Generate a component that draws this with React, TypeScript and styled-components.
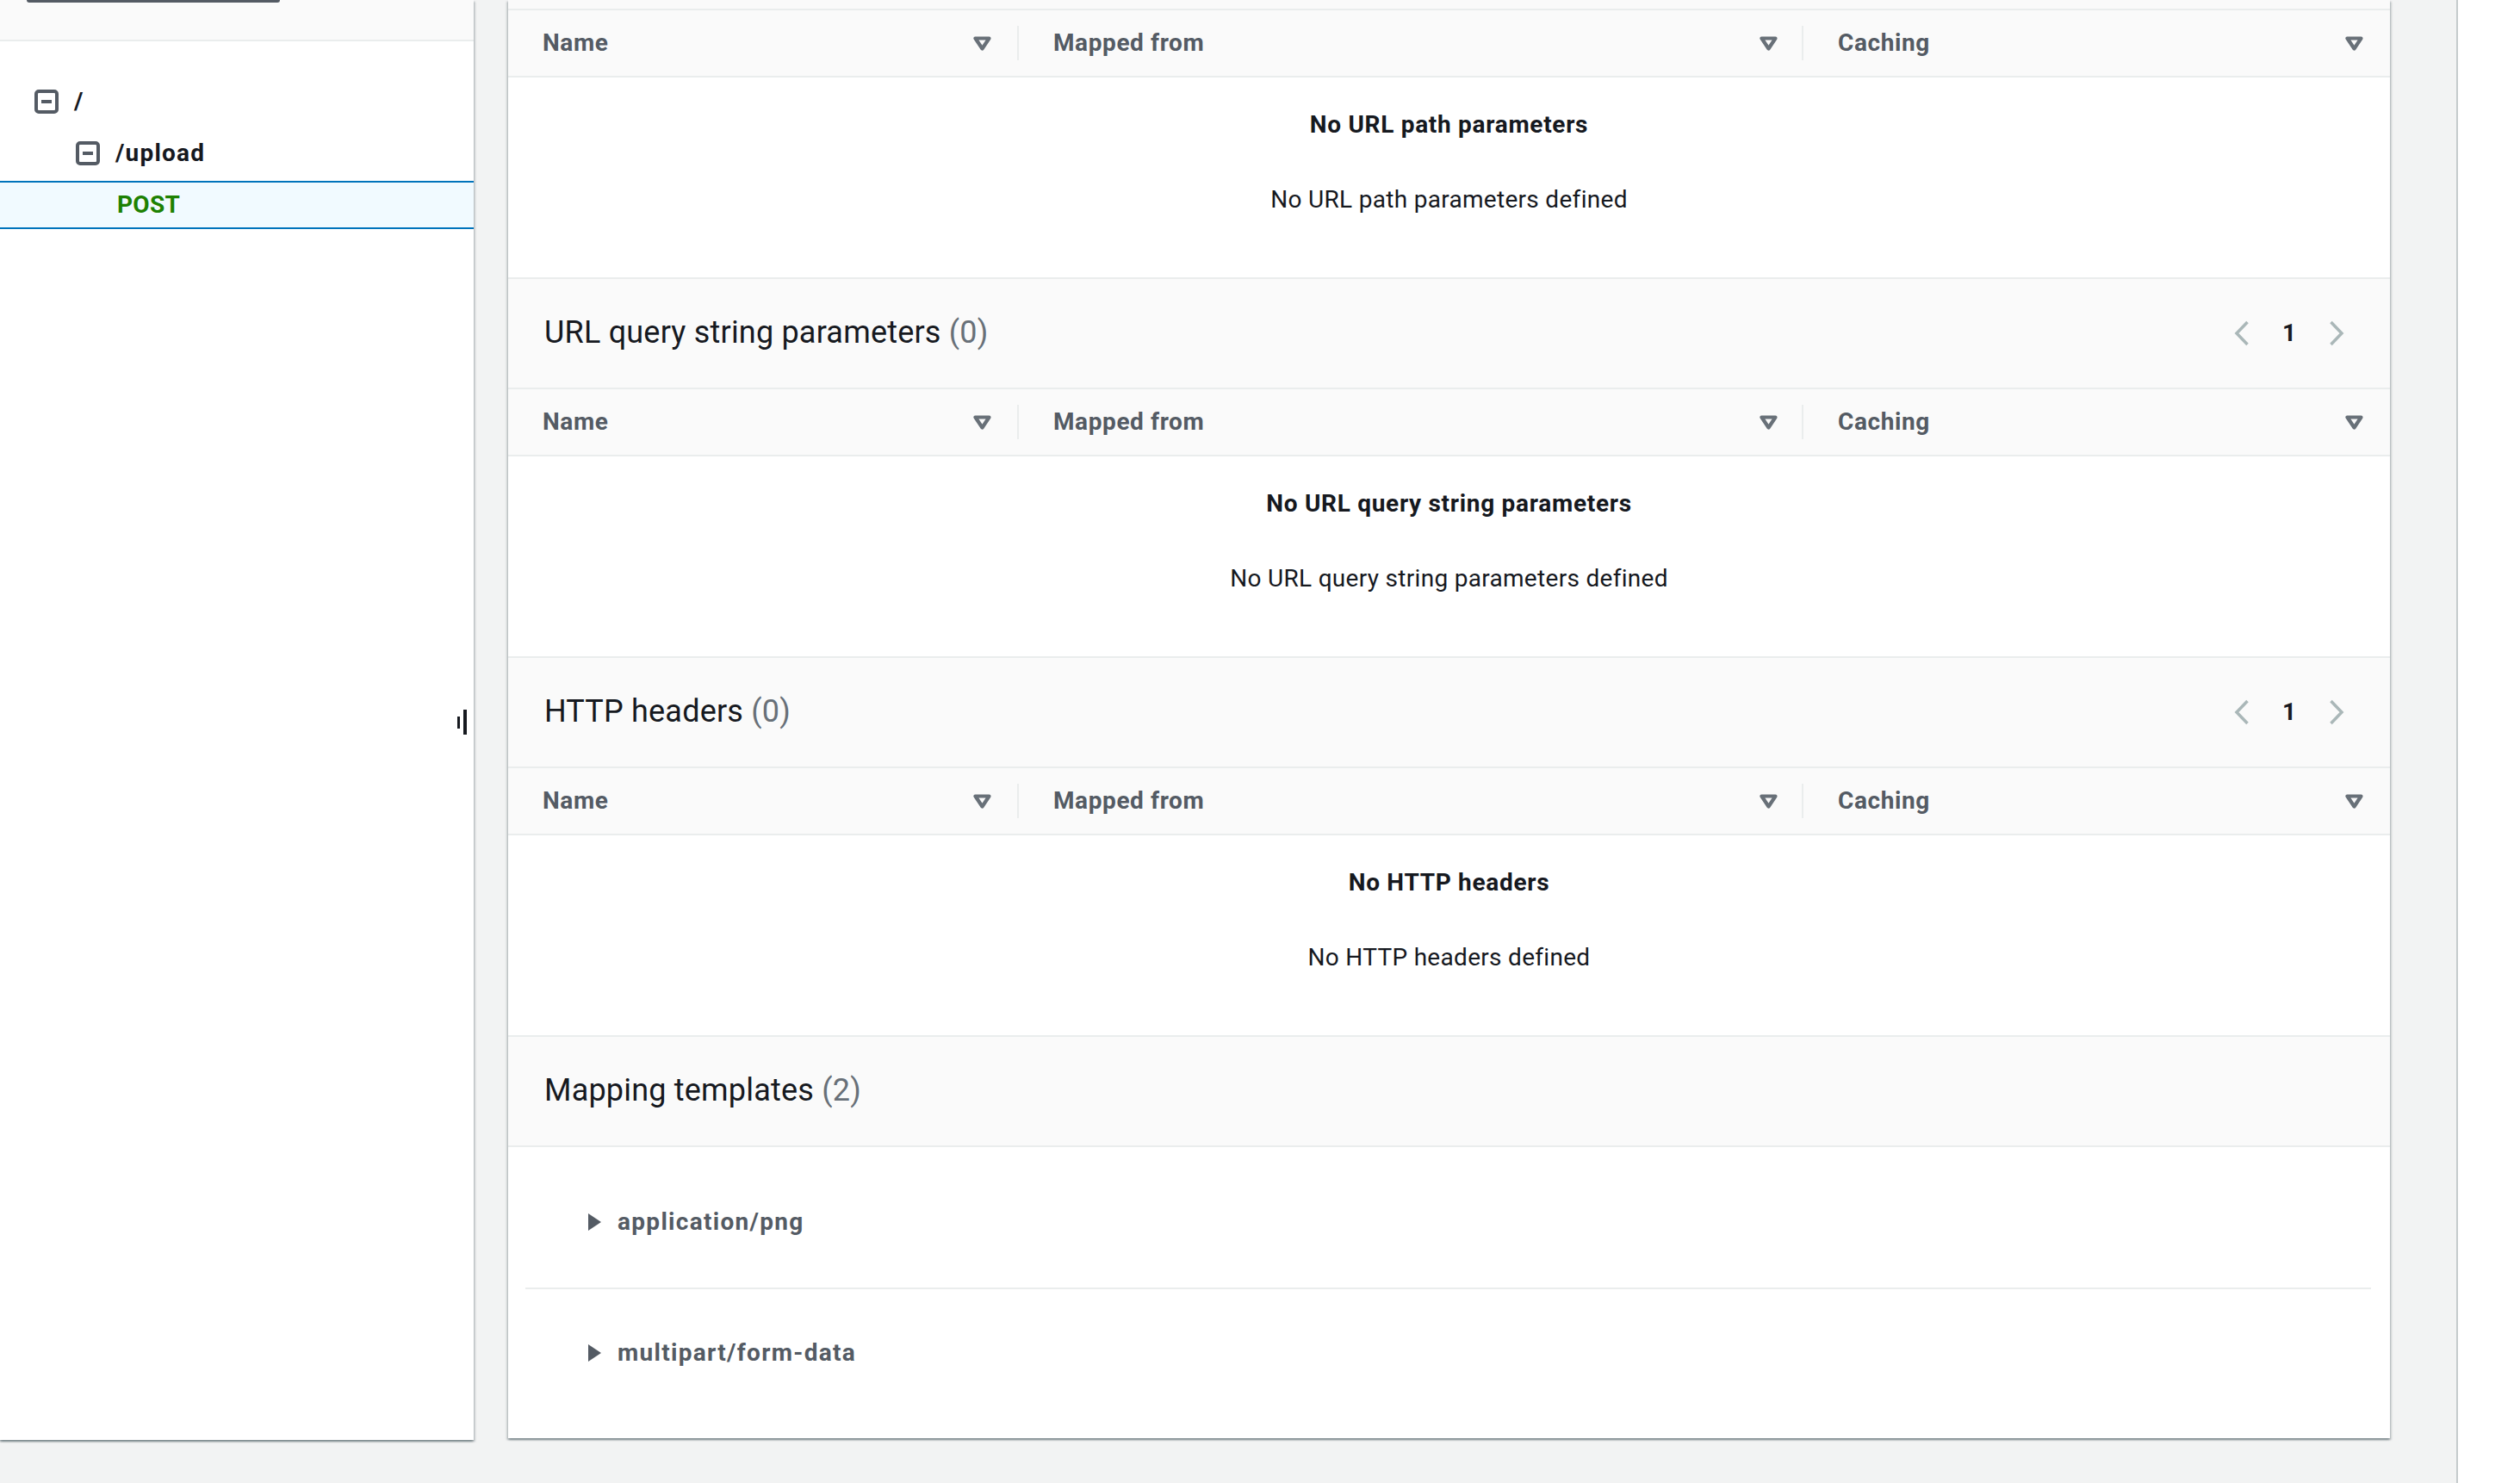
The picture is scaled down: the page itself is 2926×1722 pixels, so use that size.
import React from 'react';
import styled, { createGlobalStyle } from 'styled-components';

const GlobalStyle = createGlobalStyle`
  html, body { margin: 0; padding: 0; background: #f2f3f3; }
  body {
    font-family: Roboto, "Open Sans", "Liberation Sans", Arial, sans-serif;
    color: #16191f;
    overflow: hidden;
  }
  * { box-sizing: border-box; }
`;

const Screen = styled.div`
  width: 2926px;
  height: 1722px;
  overflow: hidden;
  display: flex;
  align-items: flex-start;
  background: #f2f3f3;
`;

const Workspace = styled.div`
  flex: 0 0 2852px;
  display: flex;
  gap: 40px;
  padding-right: 77px;
`;

const cardShadow = `
  box-shadow: 0 2px 2px 0 rgba(0, 28, 36, 0.3), 2px 2px 2px 0 rgba(0, 28, 36, 0.15),
    -2px 2px 2px 0 rgba(0, 28, 36, 0.15);
`;

const LeftPanel = styled.aside`
  position: relative;
  flex: 0 0 550px;
  background: #ffffff;
  ${cardShadow}
  margin-bottom: -2px;
`;

const LeftToolbar = styled.div`
  height: 48px;
  padding-left: 31px;
  background: #fafafa;
  border-bottom: 2px solid #eaeded;
`;

/* the lower edge of the "Actions" button, the rest is scrolled out of view */
const ButtonEdge = styled.div`
  width: 294px;
  height: 3px;
  border: 2px solid #545b64;
  border-top: none;
  border-radius: 0 0 4px 4px;
  background: #545b64;
`;

const Tree = styled.ul`
  list-style: none;
  margin: 0;
  padding: 40px 0 0;
`;

const TreeRow = styled.li<{ $level: number; $selected?: boolean }>`
  display: flex;
  align-items: center;
  gap: 18px;
  height: ${(p) => (p.$selected ? '56px' : '60px')};
  margin-top: ${(p) => (p.$selected ? '2px' : '0')};
  padding-left: ${(p) => 40 + p.$level * 48}px;
  background: ${(p) => (p.$selected ? '#f1faff' : 'transparent')};
  border-top: ${(p) => (p.$selected ? '2px solid #0073bb' : 'none')};
  border-bottom: ${(p) => (p.$selected ? '2px solid #0073bb' : 'none')};
`;

const TreeLabel = styled.span<{ $method?: boolean }>`
  font-size: 28px;
  line-height: 40px;
  font-weight: 700;
  letter-spacing: ${(p) => (p.$method ? '0.3px' : '1.2px')};
  color: ${(p) => (p.$method ? '#1d8102' : '#16191f')};
`;

const Handle = styled.div`
  position: absolute;
  right: 8px;
  top: 824px;
  display: flex;
  align-items: center;
  gap: 4px;
`;

const HandleBar = styled.span<{ $h: number; $w: number }>`
  display: block;
  width: ${(p) => p.$w}px;
  height: ${(p) => p.$h}px;
  background: #16191f;
`;

const MainPanel = styled.main`
  flex: 0 0 2185px;
  background: #ffffff;
  ${cardShadow}
  display: flex;
  flex-direction: column;
`;

const Section = styled.section<{ $first?: boolean }>`
  border-top: ${(p) => (p.$first ? 'none' : '2px solid #eaeded')};
`;

const SectionHeader = styled.header`
  height: 128px;
  padding: 0 53px 0 42px;
  display: flex;
  align-items: center;
  justify-content: space-between;
  background: #fafafa;
  border-bottom: 2px solid #eaeded;
`;

/* lower strip of a section header that is scrolled out of view */
const HeaderStrip = styled.div`
  height: 12px;
  background: #fafafa;
  border-bottom: 2px solid #eaeded;
`;

const Title = styled.h2`
  margin: 0 0 2px;
  font-size: 36px;
  line-height: 48px;
  font-weight: 400;
  color: #16191f;
  letter-spacing: 0.2px;
`;

const Count = styled.span`
  color: #687078;
`;

const Pager = styled.div`
  display: flex;
  align-items: center;
  gap: 38px;
`;

const PageNum = styled.span`
  font-size: 28px;
  line-height: 40px;
  font-weight: 700;
  color: #16191f;
`;

const TableHead = styled.div`
  display: grid;
  grid-template-columns: 591px 911px 1fr;
  height: 78px;
  background: #fafafa;
  border-bottom: 2px solid #eaeded;
`;

const HeadCell = styled.div<{ $divider?: boolean; $right: number }>`
  position: relative;
  display: flex;
  align-items: center;
  justify-content: space-between;
  padding: 0 ${(p) => p.$right}px 0 ${(p) => (p.$divider ? 42 : 40)}px;
  font-size: 28px;
  line-height: 40px;
  font-weight: 700;
  letter-spacing: 0.6px;
  color: #545b64;
  &::before {
    content: '';
    display: ${(p) => (p.$divider ? 'block' : 'none')};
    position: absolute;
    left: 0;
    top: 18px;
    bottom: 18px;
    width: 2px;
    background: #eaeded;
  }
`;

const EmptyBody = styled.div`
  height: 232px;
  padding-top: 35px;
  display: flex;
  flex-direction: column;
  align-items: center;
  text-align: center;
`;

const EmptyTitle = styled.div`
  font-size: 28px;
  line-height: 40px;
  font-weight: 700;
  letter-spacing: 0.7px;
  color: #16191f;
`;

const EmptyText = styled.div`
  margin-top: 47px;
  font-size: 28px;
  line-height: 40px;
  font-weight: 400;
  color: #16191f;
  letter-spacing: 0.3px;
`;

const TemplatesBody = styled.div`
  height: 338px;
  padding: 13px 22px 0 20px;
`;

const TemplateItem = styled.div<{ $divider?: boolean }>`
  display: flex;
  align-items: center;
  gap: 18px;
  padding: 54px 0 56px 72px;
  border-bottom: ${(p) => (p.$divider ? '2px solid #eaeded' : 'none')};
`;

const TemplateLabel = styled.span`
  font-size: 28px;
  line-height: 40px;
  font-weight: 700;
  letter-spacing: 1.3px;
  color: #545b64;
`;

const RightPane = styled.div`
  flex: 1;
  align-self: stretch;
  background: #ffffff;
  border-left: 2px solid #c5cbcc;
`;

const FilterIcon = () => (
  <svg width="21" height="17" viewBox="0 0 21 17" aria-hidden>
    <path d="M2.5 2.5 H18.5 L10.5 14.5 Z" fill="none" stroke="#687078" strokeWidth="4.2" strokeLinejoin="round" />
  </svg>
);

const Chevron = ({ dir }: { dir: 'left' | 'right' }) => (
  <svg width="18" height="30" viewBox="0 0 18 30" aria-hidden>
    <path
      d={dir === 'left' ? 'M15.5 2 L3 15 L15.5 28' : 'M2.5 2 L15 15 L2.5 28'}
      fill="none"
      stroke="#aab7b8"
      strokeWidth="3.5"
    />
  </svg>
);

const CollapseIcon = () => (
  <svg width="28" height="28" viewBox="0 0 28 28" aria-hidden>
    <rect x="2" y="2" width="24" height="24" rx="3" fill="none" stroke="#545b64" strokeWidth="4" />
    <path d="M8 14 H20" stroke="#545b64" strokeWidth="4" />
  </svg>
);

const CaretRight = () => (
  <svg width="17" height="22" viewBox="0 0 17 22" aria-hidden>
    <path d="M1 1 L16 11 L1 21 Z" fill="#545b64" />
  </svg>
);

type ParamSectionProps = {
  title?: string;
  emptyTitle: string;
  emptyText: string;
  first?: boolean;
};

const ParamSection = ({ title, emptyTitle, emptyText, first }: ParamSectionProps) => (
  <Section $first={first}>
    {title ? (
      <SectionHeader>
        <Title>
          {title} <Count>(0)</Count>
        </Title>
        <Pager>
          <Chevron dir="left" />
          <PageNum>1</PageNum>
          <Chevron dir="right" />
        </Pager>
      </SectionHeader>
    ) : (
      <HeaderStrip />
    )}
    <TableHead>
      <HeadCell $right={30}>
        <span>Name</span>
        <FilterIcon />
      </HeadCell>
      <HeadCell $divider $right={28}>
        <span>Mapped from</span>
        <FilterIcon />
      </HeadCell>
      <HeadCell $divider $right={31}>
        <span>Caching</span>
        <FilterIcon />
      </HeadCell>
    </TableHead>
    <EmptyBody>
      <EmptyTitle>{emptyTitle}</EmptyTitle>
      <EmptyText>{emptyText}</EmptyText>
    </EmptyBody>
  </Section>
);

export default function App() {
  return (
    <>
      <GlobalStyle />
      <Screen>
        <Workspace>
          <LeftPanel>
            <LeftToolbar>
              <ButtonEdge />
            </LeftToolbar>
            <Tree>
              <TreeRow $level={0}>
                <CollapseIcon />
                <TreeLabel>/</TreeLabel>
              </TreeRow>
              <TreeRow $level={1}>
                <CollapseIcon />
                <TreeLabel>/upload</TreeLabel>
              </TreeRow>
              <TreeRow $level={2} $selected>
                <TreeLabel $method>POST</TreeLabel>
              </TreeRow>
            </Tree>
            <Handle>
              <HandleBar $w={3} $h={14} />
              <HandleBar $w={4} $h={29} />
            </Handle>
          </LeftPanel>
          <MainPanel>
            <ParamSection
              first
              emptyTitle="No URL path parameters"
              emptyText="No URL path parameters defined"
            />
            <ParamSection
              title="URL query string parameters"
              emptyTitle="No URL query string parameters"
              emptyText="No URL query string parameters defined"
            />
            <ParamSection
              title="HTTP headers"
              emptyTitle="No HTTP headers"
              emptyText="No HTTP headers defined"
            />
            <Section>
              <SectionHeader>
                <Title>
                  Mapping templates <Count>(2)</Count>
                </Title>
              </SectionHeader>
              <TemplatesBody>
                <TemplateItem $divider>
                  <CaretRight />
                  <TemplateLabel>application/png</TemplateLabel>
                </TemplateItem>
                <TemplateItem>
                  <CaretRight />
                  <TemplateLabel>multipart/form-data</TemplateLabel>
                </TemplateItem>
              </TemplatesBody>
            </Section>
          </MainPanel>
        </Workspace>
        <RightPane />
      </Screen>
    </>
  );
}
